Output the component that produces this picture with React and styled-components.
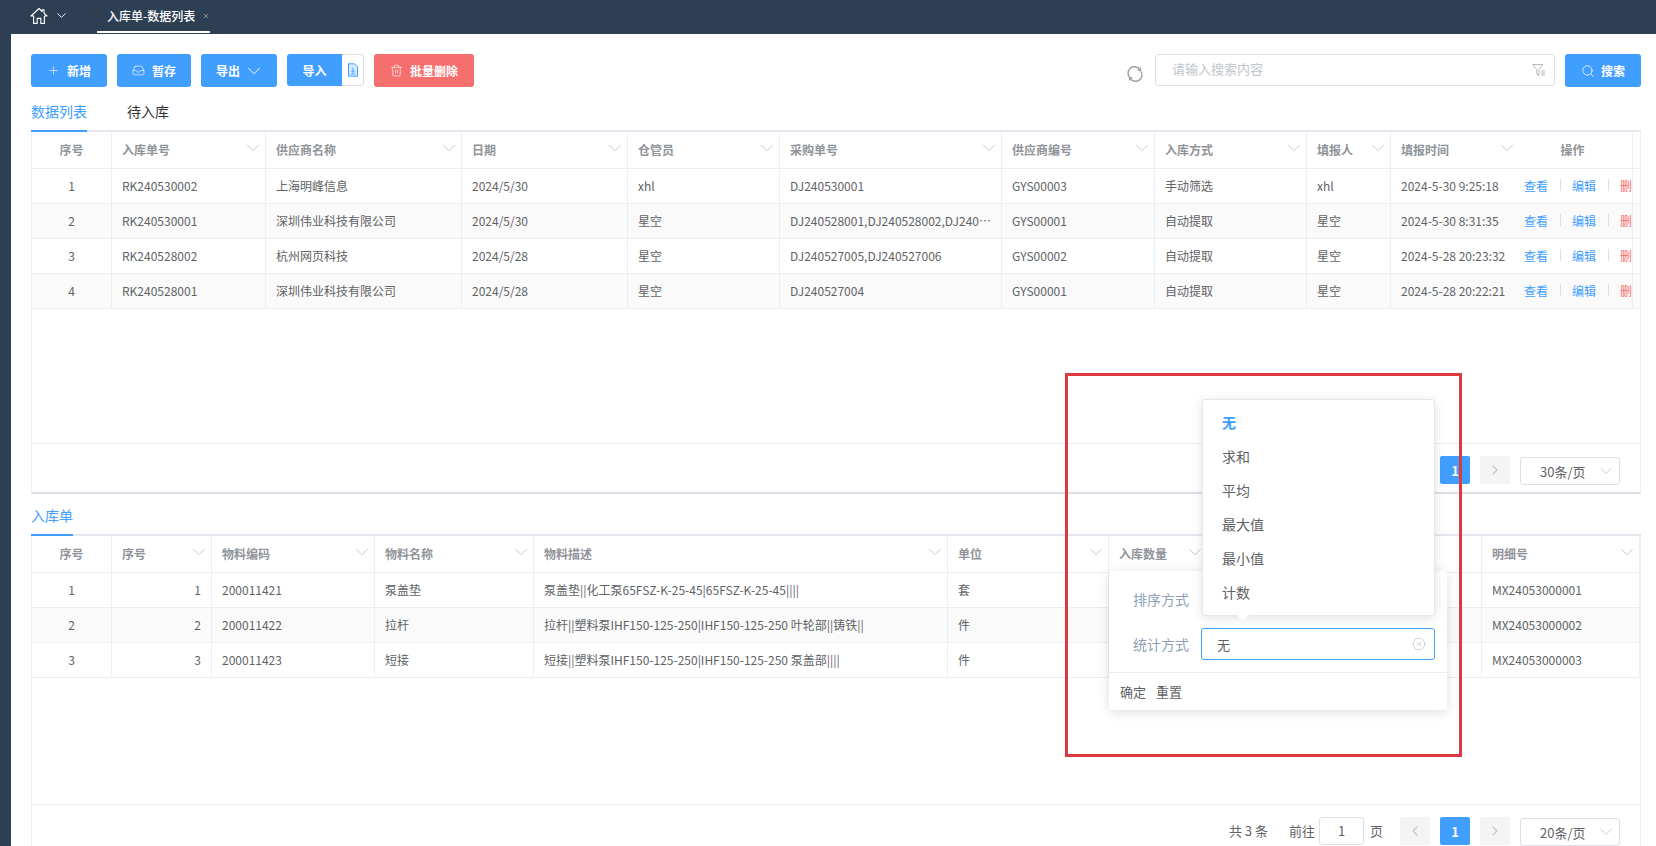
import React from "react";
import styled, { createGlobalStyle } from "styled-components";
import {
  ChevronDown,
  ChevronLeft,
  ChevronRight,
  CircleX,
  Inbox,
  Plus,
  Search,
  Trash2,
  X,
} from "lucide-react";

const blue = "#409eff";
const line = "#ebeef5";

const GlobalStyle = createGlobalStyle`
  * { box-sizing: border-box; }
  html, body { margin: 0; padding: 0; background: #2e3f54; }
  body {
    font-family: "Noto Sans CJK SC", "Noto Sans", sans-serif;
    font-size: 12px;
    color: #606266;
  }
`;

const Frame = styled.div`
  position: relative;
  width: 1656px;
  height: 846px;
  overflow: hidden;
  display: flex;
  flex-direction: column;
  background: #2e3f54;
`;

const TopBar = styled.header`
  height: 34px;
  flex: none;
  display: flex;
  align-items: stretch;
  padding-left: 30px;
  color: #fff;
`;

const HomeMenu = styled.div`
  display: flex;
  align-items: center;
  gap: 6px;
  width: 67px;
  padding-bottom: 3px;
  svg {
    display: block;
  }
`;

const PageTab = styled.div`
  width: 113px;
  height: 33px;
  padding-left: 10px;
  display: flex;
  align-items: center;
  gap: 7px;
  font-size: 12px;
  font-weight: 500;
  white-space: nowrap;
  border-bottom: 2px solid #fff;
  svg {
    flex: none;
  }
`;

const Content = styled.main`
  flex: 1;
  margin-left: 11px;
  padding: 20px 15px 0 20px;
  background: #fff;
  display: flex;
  flex-direction: column;
  min-height: 0;
`;

const Toolbar = styled.div`
  display: flex;
  align-items: flex-start;
  gap: 10px;
  height: 32px;
  flex: none;
`;

const Button = styled.button`
  height: ${(p) => p.$h || 33}px;
  width: ${(p) => p.$w}px;
  flex: none;
  display: flex;
  align-items: center;
  justify-content: center;
  gap: ${(p) => (p.$gap === undefined ? 7 : p.$gap)}px;
  padding: 0 0 0 ${(p) => p.$pl || 0}px;
  border: 0;
  border-radius: 3px;
  background: ${(p) => p.$bg || blue};
  color: #fff;
  font: 700 12px "Noto Sans CJK SC", sans-serif;
`;

const ImportGroup = styled.div`
  display: flex;
  width: 77px;
  flex: none;
`;

const ImportButton = styled(Button)`
  border-radius: 3px 0 0 3px;
`;

const UploadBox = styled.div`
  width: 22px;
  height: 32px;
  display: flex;
  align-items: center;
  justify-content: center;
  border: 1px solid #dcdfe6;
  border-left: 0;
  border-radius: 0 3px 3px 0;
`;

const SearchArea = styled.div`
  margin-left: auto;
  display: flex;
  align-items: flex-start;
  gap: 10px;
`;

const RefreshIcon = styled.svg`
  margin: 11px 1px 0 0;
  display: block;
`;

const SearchInput = styled.div`
  width: 400px;
  height: 32px;
  border: 1px solid #dcdfe6;
  border-radius: 3px;
  padding: 0 8px 3px 16px;
  display: flex;
  align-items: center;
  justify-content: space-between;
  font-size: 13px;
  color: #c0c4cc;
  svg {
    margin-top: 3px;
  }
`;

const TabBar = styled.div`
  flex: none;
  margin-top: 6px;
  height: 40px;
  display: flex;
  gap: 40px;
  border-bottom: 2px solid #e4e7ed;
`;

const TabItem = styled.div`
  height: 40px;
  line-height: 38px;
  font-size: 14px;
  color: ${(p) => (p.$active ? blue : "#303133")};
  border-bottom: 2px solid ${(p) => (p.$active ? blue : "transparent")};
`;

const LowerTabBar = styled(TabBar)`
  margin-top: 2px;
`;

const Panel = styled.section`
  height: ${(p) => p.$h}px;
  flex: none;
  display: flex;
  flex-direction: column;
  border-left: 1px solid ${line};
  border-right: 1px solid ${line};
  border-bottom: ${(p) => (p.$closed ? "2px solid #dcdfe6" : "0")};
`;

const Row = styled.div`
  flex: none;
  height: ${(p) => (p.$head ? 37 : 35)}px;
  display: grid;
  grid-template-columns: ${(p) => p.$cols};
  background: ${(p) => (p.$zebra ? "#fafafa" : "#fff")};
  border-bottom: 1px solid ${line};
`;

const Cell = styled.div`
  min-width: 0;
  padding: 0 10px 2px;
  display: flex;
  align-items: center;
  justify-content: ${(p) =>
    p.$align === "center"
      ? "center"
      : p.$align === "right"
      ? "flex-end"
      : "flex-start"};
  border-right: ${(p) => (p.$bare ? "0" : `1px solid ${line}`)};
  overflow: hidden;
  white-space: nowrap;
`;

const Clip = styled.span`
  overflow: hidden;
  text-overflow: ellipsis;
`;

const HeadCell = styled(Cell)`
  color: #909399;
  font-weight: 700;
  justify-content: ${(p) => (p.$center ? "center" : "space-between")};
  padding-right: ${(p) => (p.$center ? 10 : 1)}px;
  svg {
    flex: none;
    margin-top: -2px;
  }
`;

const OperateHead = styled(HeadCell)`
  padding-right: 16px;
`;

const ActionCell = styled(Cell)`
  padding: 0 0 2px 5px;
  gap: 11.5px;
`;

const ActionLink = styled.span`
  flex: none;
  color: ${(p) => (p.$danger ? "#f56c6c" : blue)};
`;

const Divider = styled.i`
  flex: none;
  width: 1px;
  height: 12px;
  background: #dcdfe6;
`;

const Spacer = styled.div`
  flex: 1;
`;

const Pager = styled.div`
  flex: none;
  height: ${(p) => p.$h}px;
  border-top: 1px solid ${line};
  padding: 12px 20px 0 0;
  display: flex;
  justify-content: flex-end;
  align-items: flex-start;
  font-size: 13px;
  color: #606266;
`;

const PagerText = styled.span`
  height: 28px;
  line-height: 28px;
  margin-right: ${(p) => p.$mr || 0}px;
`;

const JumpInput = styled.div`
  width: 45px;
  height: 28px;
  margin: 0 6px 0 4px;
  border: 1px solid #dcdfe6;
  border-radius: 3px;
  text-align: center;
  line-height: 26px;
`;

const PageButton = styled.div`
  width: 30px;
  height: 28px;
  margin-left: 10px;
  display: flex;
  align-items: center;
  justify-content: center;
  border-radius: 2px;
  background: ${(p) => (p.$active ? blue : "#f4f4f5")};
  color: ${(p) => (p.$active ? "#fff" : "#c0c4cc")};
  font-weight: 700;
`;

const SizeSelect = styled.div`
  width: 100px;
  height: 28px;
  margin-left: 10px;
  margin-top: 1px;
  padding: 0 3px 0 19px;
  display: flex;
  align-items: center;
  justify-content: space-between;
  border: 1px solid #dcdfe6;
  border-radius: 3px;
`;

const FilterPanel = styled.div`
  position: absolute;
  left: 1109px;
  top: 571px;
  width: 338px;
  height: 139px;
  background: #fff;
  border-radius: 3px;
  box-shadow: 0 2px 12px rgba(0, 0, 0, 0.14);
`;

const FilterRow = styled.div`
  height: 32px;
  margin-top: ${(p) => p.$mt}px;
  padding-left: 24px;
  display: flex;
  align-items: center;
  gap: 12px;
`;

const FilterLabel = styled.span`
  width: 56px;
  font-size: 14px;
  color: #8f9fb8;
`;

const FilterInput = styled.div`
  width: 234px;
  height: 32px;
  padding: 0 8px 0 15px;
  display: flex;
  align-items: center;
  justify-content: space-between;
  font-size: 13px;
  color: #606266;
  border: 1px solid ${blue};
  border-radius: 3px;
`;

const FilterFooter = styled.div`
  margin-top: 12px;
  padding: 0 11px;
  height: 37px;
  display: flex;
  align-items: center;
  gap: 10px;
  font-size: 13px;
  color: #606266;
  border-top: 1px solid ${line};
`;

const OptionList = styled.ul`
  position: absolute;
  left: 1202px;
  top: 399px;
  width: 233px;
  height: 217px;
  margin: 0;
  padding: 5px 0;
  list-style: none;
  background: #fff;
  border: 1px solid #e4e7ed;
  border-radius: 3px;
  box-shadow: 0 2px 12px rgba(0, 0, 0, 0.12);
  &::after {
    content: "";
    position: absolute;
    left: 34px;
    bottom: -6px;
    border: 6px solid transparent;
    border-bottom: 0;
    border-top-color: #fff;
  }
`;

const OptionItem = styled.li`
  height: 34px;
  line-height: 34px;
  padding-left: 19px;
  font-size: 14px;
  font-weight: ${(p) => (p.$active ? 700 : 400)};
  color: ${(p) => (p.$active ? blue : "#606266")};
`;

const Highlight = styled.div`
  position: absolute;
  left: 1065px;
  top: 373px;
  width: 397px;
  height: 384px;
  border: 3px solid #dc3a3f;
  pointer-events: none;
`;

const HomeIcon = () => (
  <svg width="18" height="18" viewBox="0 0 18 18" fill="none" stroke="#fff" strokeWidth="1.1" strokeLinejoin="round">
    <path d="M1 9 9 1.5l3.2 3V2.8h1.8v3.4L17 9h-2.6v7.4h-3.6v-5H7.2v5H3.6V9z" />
  </svg>
);

const UploadIcon = () => (
  <svg width="12" height="14" viewBox="0 0 12 14" fill="#d9ecff" stroke={blue} strokeWidth="1">
    <path d="M1.5.8h6l3 3v9.4h-9z" />
    <path d="M6 4.5v4.5M4 7.5 6 9.5l2-2M3.5 11h5" fill="none" />
  </svg>
);

const Refresh = () => (
  <RefreshIcon width="18" height="18" viewBox="0 0 18 18" fill="none" stroke="#9a9ea6" strokeWidth="1.4">
    <path d="M3.2 11.8A6.3 6.3 0 0 1 13.6 4.4" />
    <path d="M14.8 6.2A6.3 6.3 0 0 1 4.4 13.6" />
    <path d="M14.4 2.6v2.6h-2.6M3.6 15.4v-2.6h2.6" />
  </RefreshIcon>
);

const FunnelIcon = () => (
  <svg width="14" height="14" viewBox="0 0 14 14" fill="none" stroke="#b4b8bf" strokeWidth="1">
    <path d="M.8 1.5h10L7 6.5v6L4.8 11V6.5z" />
    <path d="M9 8h4M9 10h4M9 12h4" />
  </svg>
);

const SortArrow = () => <ChevronDown size={22} strokeWidth={1} color="#c0c4cc" />;

const topCols = "80px 154px 196px 166px 152px 222px 153px 152px 84px 128px 114px 7px";
const bottomCols = "80px 100px 163px 159px 414px 161px 99px 274px 158px";

const topHead = [
  "入库单号",
  "供应商名称",
  "日期",
  "仓管员",
  "采购单号",
  "供应商编号",
  "入库方式",
  "填报人",
];

const topRows = [
  ["RK240530002", "上海明峰信息", "2024/5/30", "xhl", "DJ240530001", "GYS00003", "手动筛选", "xhl", "2024-5-30 9:25:18"],
  ["RK240530001", "深圳伟业科技有限公司", "2024/5/30", "星空", "DJ240528001,DJ240528002,DJ240528003", "GYS00001", "自动提取", "星空", "2024-5-30 8:31:35"],
  ["RK240528002", "杭州网页科技", "2024/5/28", "星空", "DJ240527005,DJ240527006", "GYS00002", "自动提取", "星空", "2024-5-28 20:23:32"],
  ["RK240528001", "深圳伟业科技有限公司", "2024/5/28", "星空", "DJ240527004", "GYS00001", "自动提取", "星空", "2024-5-28 20:22:21"],
];

const bottomHead = ["序号", "物料编码", "物料名称", "物料描述", "单位", "入库数量", "", "明细号"];

const bottomRows = [
  ["1", "200011421", "泵盖垫", "泵盖垫||化工泵65FSZ-K-25-45|65FSZ-K-25-45||||", "套", "", "", "MX24053000001"],
  ["2", "200011422", "拉杆", "拉杆||塑料泵IHF150-125-250|IHF150-125-250 叶轮部||铸铁||", "件", "", "", "MX24053000002"],
  ["3", "200011423", "短接", "短接||塑料泵IHF150-125-250|IHF150-125-250 泵盖部||||", "件", "", "", "MX24053000003"],
];

const options = ["无", "求和", "平均", "最大值", "最小值", "计数"];

// the upper pager's left part sits behind the option list, so it only shows the buttons
function Pagination({ total, size, height }) {
  return (
    <Pager $h={height}>
      {total && (
        <>
          <PagerText $mr={21}>共 {total} 条</PagerText>
          <PagerText>前往</PagerText>
          <JumpInput>1</JumpInput>
          <PagerText $mr={7}>页</PagerText>
        </>
      )}
      <PageButton>
        <ChevronLeft size={16} strokeWidth={1.6} />
      </PageButton>
      <PageButton $active>1</PageButton>
      <PageButton>
        <ChevronRight size={16} strokeWidth={1.6} />
      </PageButton>
      <SizeSelect>
        {size}条/页
        <ChevronDown size={20} strokeWidth={1.1} color="#c0c4cc" />
      </SizeSelect>
    </Pager>
  );
}

export default function App() {
  return (
    <Frame>
      <GlobalStyle />
      <TopBar>
        <HomeMenu>
          <HomeIcon />
          <ChevronDown size={15} strokeWidth={1.5} color="#fff" />
        </HomeMenu>
        <PageTab>
          入库单-数据列表
          <X size={8} strokeWidth={1.5} color="#d5d9df" />
        </PageTab>
      </TopBar>
      <Content>
        <Toolbar>
          <Button $w={76}>
            <Plus size={13} strokeWidth={1.2} />
            新增
          </Button>
          <Button $w={74}>
            <Inbox size={13} strokeWidth={1.2} />
            暂存
          </Button>
          <Button $w={76} $gap={3} $pl={3}>
            导出
            <ChevronDown size={22} strokeWidth={1} />
          </Button>
          <ImportGroup>
            <ImportButton $w={55} $h={32}>导入</ImportButton>
            <UploadBox>
              <UploadIcon />
            </UploadBox>
          </ImportGroup>
          <Button $w={100} $bg="#f66f6f">
            <Trash2 size={13} strokeWidth={1.2} />
            批量删除
          </Button>
          <SearchArea>
            <Refresh />
            <SearchInput>
              请输入搜索内容
              <FunnelIcon />
            </SearchInput>
            <Button $w={76} $gap={6}>
              <Search size={14} strokeWidth={1.4} />
              搜索
            </Button>
          </SearchArea>
        </Toolbar>

        <TabBar>
          <TabItem $active>数据列表</TabItem>
          <TabItem>待入库</TabItem>
        </TabBar>

        <Panel $h={362} $closed>
          <Row $head $cols={topCols}>
            <HeadCell $center>序号</HeadCell>
            {topHead.map((h) => (
              <HeadCell key={h}>
                {h}
                <SortArrow />
              </HeadCell>
            ))}
            <HeadCell $bare>
              填报时间
              <SortArrow />
            </HeadCell>
            <OperateHead $center>操作</OperateHead>
            <Cell $bare />
          </Row>
          {topRows.map((row, i) => (
            <Row key={row[0]} $cols={topCols} $zebra={i % 2 === 1}>
              <Cell $align="center">{i + 1}</Cell>
              {row.map((v, j) => (
                <Cell key={j} $bare={j === row.length - 1}>
                  <Clip>{v}</Clip>
                </Cell>
              ))}
              <ActionCell>
                <ActionLink>查看</ActionLink>
                <Divider />
                <ActionLink>编辑</ActionLink>
                <Divider />
                <ActionLink $danger>删除</ActionLink>
              </ActionCell>
              <Cell $bare />
            </Row>
          ))}
          <Spacer />
          <Pagination size={30} height={49} />
        </Panel>

        <LowerTabBar>
          <TabItem $active>入库单</TabItem>
        </LowerTabBar>

        <Panel $h={310}>
          <Row $head $cols={bottomCols}>
            <HeadCell $center>序号</HeadCell>
            {bottomHead.map((h, i) => (
              <HeadCell key={i}>
                {h}
                <SortArrow />
              </HeadCell>
            ))}
          </Row>
          {bottomRows.map((row, i) => (
            <Row key={row[0]} $cols={bottomCols} $zebra={i % 2 === 1}>
              <Cell $align="center">{i + 1}</Cell>
              {row.map((v, j) => (
                <Cell key={j} $align={j === 0 ? "right" : undefined}>
                  <Clip>{v}</Clip>
                </Cell>
              ))}
            </Row>
          ))}
          <Spacer />
          <Pagination total={3} size={20} height={42} />
        </Panel>
      </Content>

      <FilterPanel>
        <FilterRow $mt={12}>
          <FilterLabel>排序方式</FilterLabel>
        </FilterRow>
        <FilterRow $mt={13}>
          <FilterLabel>统计方式</FilterLabel>
          <FilterInput>
            无
            <CircleX size={14} strokeWidth={1} color="#b4b8c0" />
          </FilterInput>
        </FilterRow>
        <FilterFooter>
          <span>确定</span>
          <span>重置</span>
        </FilterFooter>
      </FilterPanel>

      <OptionList>
        {options.map((o, i) => (
          <OptionItem key={o} $active={i === 0}>
            {o}
          </OptionItem>
        ))}
      </OptionList>

      <Highlight />
    </Frame>
  );
}
